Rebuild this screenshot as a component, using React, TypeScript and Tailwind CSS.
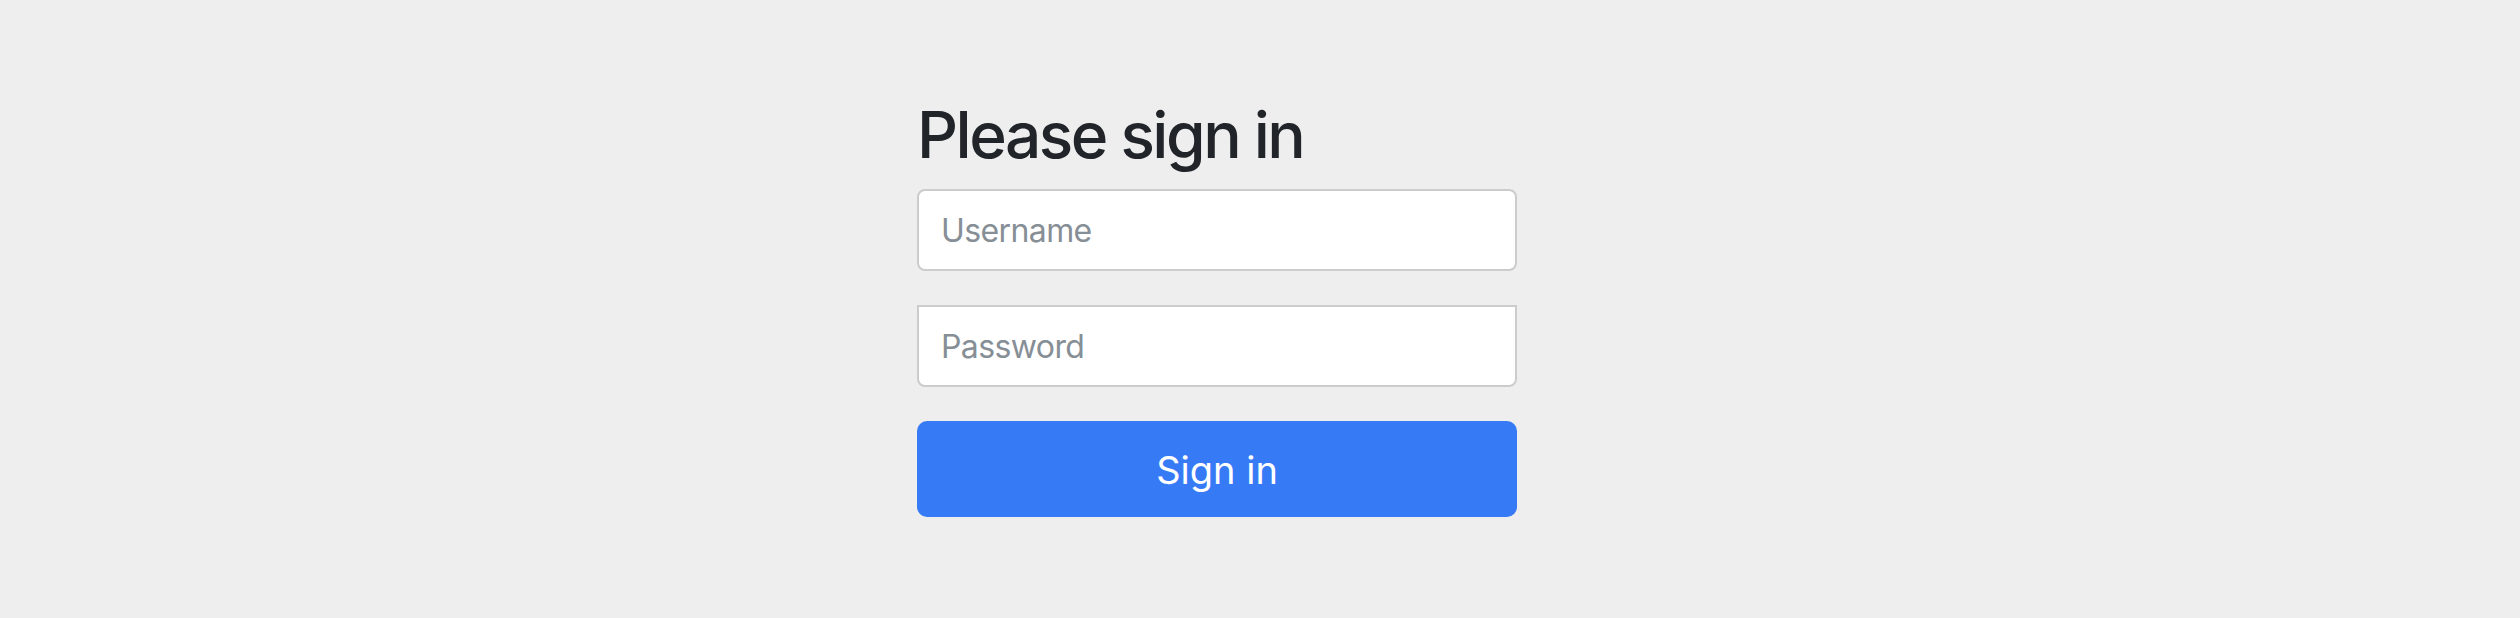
import React from "react";

export default function App() {
  return (
    <div className="min-h-screen bg-[#eeeeee] font-['Inter','Liberation_Sans',sans-serif] text-[#212529]">
      <div className="pl-[917px] pt-[103px]">
        <form className="flex w-[600px] flex-col" onSubmit={(e) => e.preventDefault()}>
          <h2 className="mb-[22px] text-[64px] font-medium leading-[64px] tracking-[-2.5px]">
            Please sign in
          </h2>
          <input
            type="text"
            name="username"
            placeholder="Username"
            className="h-[82px] w-full rounded-[8px] border-2 border-[#cccccc] bg-white px-[22px] text-[32px] tracking-[-0.6px] text-[#495057] outline-none placeholder:text-[#868e96]"
          />
          <input
            type="password"
            name="password"
            placeholder="Password"
            className="mt-[34px] h-[82px] w-full rounded-b-[8px] border-2 border-[#cccccc] bg-white px-[22px] text-[32px] tracking-[-0.6px] text-[#495057] outline-none placeholder:text-[#868e96]"
          />
          <button
            type="submit"
            className="mt-[34px] h-[96px] w-full rounded-[10px] bg-[#377af6] pt-[3px] text-[38px] text-white"
          >
            Sign in
          </button>
        </form>
      </div>
    </div>
  );
}
